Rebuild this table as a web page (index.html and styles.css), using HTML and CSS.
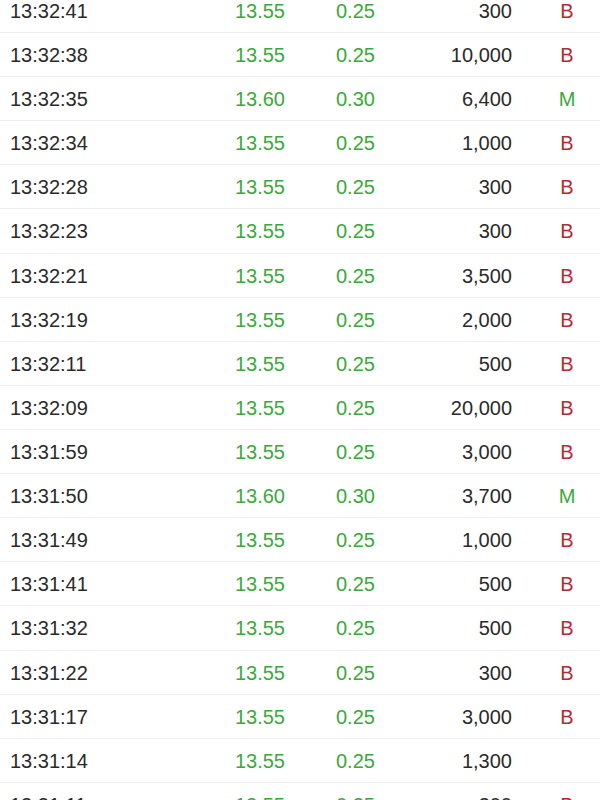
FILE: index.html
```html
<!DOCTYPE html>
<html>
<head>
<meta charset="utf-8">
<link rel="stylesheet" href="styles.css">
</head>
<body>
<div class="list">
  <div class="row"><span class="time">13:32:41</span><span class="price">13.55</span><span class="chg">0.25</span><span class="vol">300</span><span class="flag b">B</span></div>
  <div class="row"><span class="time">13:32:38</span><span class="price">13.55</span><span class="chg">0.25</span><span class="vol">10,000</span><span class="flag b">B</span></div>
  <div class="row"><span class="time">13:32:35</span><span class="price">13.60</span><span class="chg">0.30</span><span class="vol">6,400</span><span class="flag m">M</span></div>
  <div class="row"><span class="time">13:32:34</span><span class="price">13.55</span><span class="chg">0.25</span><span class="vol">1,000</span><span class="flag b">B</span></div>
  <div class="row"><span class="time">13:32:28</span><span class="price">13.55</span><span class="chg">0.25</span><span class="vol">300</span><span class="flag b">B</span></div>
  <div class="row"><span class="time">13:32:23</span><span class="price">13.55</span><span class="chg">0.25</span><span class="vol">300</span><span class="flag b">B</span></div>
  <div class="row"><span class="time">13:32:21</span><span class="price">13.55</span><span class="chg">0.25</span><span class="vol">3,500</span><span class="flag b">B</span></div>
  <div class="row"><span class="time">13:32:19</span><span class="price">13.55</span><span class="chg">0.25</span><span class="vol">2,000</span><span class="flag b">B</span></div>
  <div class="row"><span class="time">13:32:11</span><span class="price">13.55</span><span class="chg">0.25</span><span class="vol">500</span><span class="flag b">B</span></div>
  <div class="row"><span class="time">13:32:09</span><span class="price">13.55</span><span class="chg">0.25</span><span class="vol">20,000</span><span class="flag b">B</span></div>
  <div class="row"><span class="time">13:31:59</span><span class="price">13.55</span><span class="chg">0.25</span><span class="vol">3,000</span><span class="flag b">B</span></div>
  <div class="row"><span class="time">13:31:50</span><span class="price">13.60</span><span class="chg">0.30</span><span class="vol">3,700</span><span class="flag m">M</span></div>
  <div class="row"><span class="time">13:31:49</span><span class="price">13.55</span><span class="chg">0.25</span><span class="vol">1,000</span><span class="flag b">B</span></div>
  <div class="row"><span class="time">13:31:41</span><span class="price">13.55</span><span class="chg">0.25</span><span class="vol">500</span><span class="flag b">B</span></div>
  <div class="row"><span class="time">13:31:32</span><span class="price">13.55</span><span class="chg">0.25</span><span class="vol">500</span><span class="flag b">B</span></div>
  <div class="row"><span class="time">13:31:22</span><span class="price">13.55</span><span class="chg">0.25</span><span class="vol">300</span><span class="flag b">B</span></div>
  <div class="row"><span class="time">13:31:17</span><span class="price">13.55</span><span class="chg">0.25</span><span class="vol">3,000</span><span class="flag b">B</span></div>
  <div class="row"><span class="time">13:31:14</span><span class="price">13.55</span><span class="chg">0.25</span><span class="vol">1,300</span><span class="flag"></span></div>
  <div class="row"><span class="time">13:31:11</span><span class="price">13.55</span><span class="chg">0.25</span><span class="vol">300</span><span class="flag b">B</span></div>
</div>
</body>
</html>
```
FILE: styles.css
```css
html, body {
  margin: 0;
  padding: 0;
  background: #ffffff;
  overflow: hidden;
}
body {
  font-family: "Liberation Sans", Arial, sans-serif;
  font-size: 20px;
  color: #2a2a2a;
}
.list {
  margin-top: -11.12px;
}
.row {
  display: grid;
  grid-template-columns: 215px 60px 51px 84px 92px 28px 54px;
  box-sizing: border-box;
  padding-left: 10px;
  padding-top: 2px;
  height: 44.12px;
  align-items: center;
  border-bottom: 1px solid #efefef;
}
.time { grid-column: 1; }
.price { grid-column: 2; text-align: right; color: #3aa93a; }
.chg { grid-column: 4; text-align: left; color: #3aa93a; }
.vol { grid-column: 5; text-align: right; }
.flag { grid-column: 7; text-align: center; }
.flag.b { color: #b52a31; }
.flag.m { color: #3aa93a; }
```
